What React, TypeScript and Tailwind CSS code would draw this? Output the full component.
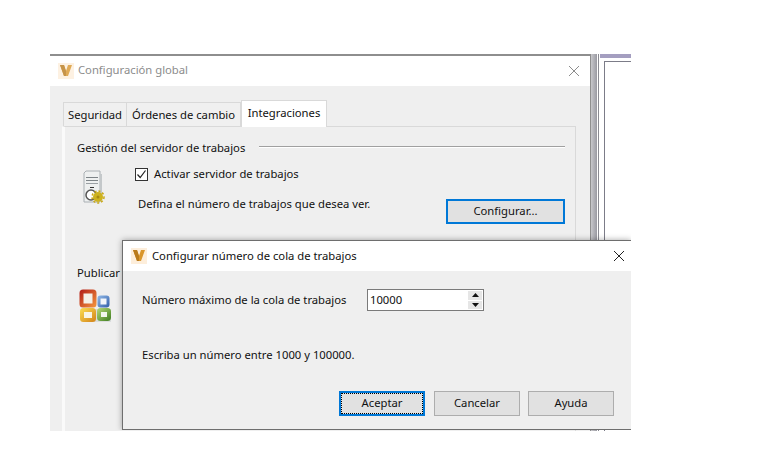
function VaultLogo({ faded }: { faded?: boolean }) {
  return (
    <svg width="16" height="16" viewBox="0 0 16 16" className={faded ? "opacity-80" : ""}>
      <rect width="16" height="16" fill="#fdeedb" />
      <polygon points="2,2 6,2 8,8 10,2 14,2 10,13 6,13" fill="#d9962c" />
      <polygon points="6,2 8,8 8,13 6,13 2,2" fill="#b87a1c" />
    </svg>
  );
}

function ServerIcon() {
  return (
    <svg width="22" height="34" viewBox="0 0 22 34">
      <path d="M1 3 L3 1 H17 V32 H1 Z" fill="#eef0f0" stroke="#aab0b4" />
      <rect x="17" y="4" width="2" height="28" fill="#c4c8ca" />
      <rect x="3" y="7" width="12" height="1" fill="#7d8488" />
      <rect x="3" y="10" width="12" height="1" fill="#7d8488" />
      <rect x="3" y="13" width="12" height="1" fill="#9aa0a4" />
      <rect x="7" y="17" width="4" height="1" fill="#333" />
      <circle cx="8" cy="25" r="5" fill="#fff" stroke="#555" strokeWidth="1.5" />
      <circle cx="15" cy="27" r="5" fill="#cdb21e" />
      <circle cx="15" cy="27" r="6" fill="none" stroke="#c9a814" strokeWidth="1.5" strokeDasharray="2 2" />
      <circle cx="15" cy="27" r="1.5" fill="#a88a10" />
    </svg>
  );
}

function OfficeIcon() {
  return (
    <svg width="33" height="34" viewBox="0 0 33 34">
      <defs>
        <linearGradient id="officeRed" x1="0" y1="0" x2="1" y2="1">
          <stop offset="0" stopColor="#b8281c" />
          <stop offset="1" stopColor="#ee8a3a" />
        </linearGradient>
        <linearGradient id="officeBlue" x1="0" y1="0" x2="1" y2="1">
          <stop offset="0" stopColor="#86aee0" />
          <stop offset="1" stopColor="#3d69b0" />
        </linearGradient>
        <linearGradient id="officeYellow" x1="0" y1="0" x2="1" y2="1">
          <stop offset="0" stopColor="#f6d24a" />
          <stop offset="1" stopColor="#d88e20" />
        </linearGradient>
        <linearGradient id="officeGreen" x1="0" y1="0" x2="1" y2="1">
          <stop offset="0" stopColor="#a6cc6a" />
          <stop offset="1" stopColor="#4f8a2c" />
        </linearGradient>
      </defs>
      <rect x="3" y="20" width="29" height="13" fill="#b8bcc0" opacity="0.35" />
      <rect x="2.5" y="2.5" width="13" height="14" rx="1.5" fill="#f4f0e8" stroke="url(#officeRed)" strokeWidth="4" />
      <rect x="20" y="8" width="9" height="9" rx="1.5" fill="#f2f5fa" stroke="url(#officeBlue)" strokeWidth="3" />
      <rect x="3" y="21" width="12" height="10" rx="1.5" fill="#f8f4e4" stroke="url(#officeYellow)" strokeWidth="4" />
      <rect x="20" y="21" width="10" height="9" rx="1.5" fill="#f2f6ec" stroke="url(#officeGreen)" strokeWidth="4" />
    </svg>
  );
}

function CloseIcon({ color }: { color: string }) {
  return (
    <svg width="12" height="12" viewBox="0 0 12 12">
      <path d="M1 1 L11 11 M11 1 L1 11" stroke={color} strokeWidth="1" fill="none" />
    </svg>
  );
}

function DlgButton({ label, focused }: { label: string; focused?: boolean }) {
  return (
    <div
      className={
        focused
          ? "w-[86px] h-[25px] border-2 border-[#0078d7] bg-[#e1e1e1] flex items-center justify-center"
          : "w-[86px] h-[25px] border border-[#adadad] bg-[#e1e1e1] flex items-center justify-center"
      }
    >
      {focused ? (
        <div className="w-full h-full border border-dotted border-black flex items-center justify-center">{label}</div>
      ) : (
        label
      )}
    </div>
  );
}

export default function App() {
  return (
    <div className="relative w-[758px] h-[454px] bg-white overflow-hidden text-[11.25px] text-[#111] font-['Noto_Sans',sans-serif]">
      {/* back window */}
      <div className="absolute left-[50px] top-[54px] w-[541px] h-[377px] border-t-2 border-r border-[#8e8e8e] bg-[#efefef] flex flex-col">
        <div className="h-[30px] bg-white flex items-center pl-[8px] pr-[10px] shrink-0">
          <VaultLogo faded />
          <span className="ml-[4px] pb-[2px] text-[#8c8c8c] flex-1">Configuración global</span>
          <CloseIcon color="#8c8c8c" />
        </div>
        <div className="flex pl-[13px] pt-[15px] relative">
          <div className="h-[24px] w-[64px] mt-[1px] pt-[1px] bg-[#f0f0f0] border border-b-0 border-[#d9d9d9] flex items-center justify-center">Seguridad</div>
          <div className="h-[24px] w-[114px] mt-[1px] pt-[1px] bg-[#f0f0f0] border-t border-r border-[#d9d9d9] flex items-center justify-center">Órdenes de cambio</div>
          <div className="h-[27px] w-[86px] -mt-[1px] -mb-[1px] bg-white border border-b-0 border-[#d9d9d9] z-10 flex items-center justify-center pb-[2px]">Integraciones</div>
        </div>
        <div className="ml-[12px] w-[514px] flex-1 border border-b-0 border-[#d9d9d9] bg-[#efefef] pl-[12px] border-l-[3px] border-l-[#fafafa] pt-[12px]">
          <div className="flex items-center h-[18px]">
            <span className="whitespace-nowrap">Gestión del servidor de trabajos</span>
            <div className="ml-[14px] flex-1 mr-[10px] mb-[3px] h-[2px] border-t border-[#a0a0a0] bg-white"></div>
          </div>
          <div className="flex mt-[8px]">
            <div className="ml-[6px] mt-[5px] w-[52px]">
              <ServerIcon />
            </div>
            <div className="flex-1">
              <div className="flex items-center h-[18px]">
                <div className="w-[13px] h-[13px] border border-[#333] bg-white flex items-center justify-center">
                  <svg width="11" height="11" viewBox="0 0 11 11">
                    <path d="M1.5 5.5 L4.2 8.5 L9.5 1.5" stroke="#222" strokeWidth="1.2" fill="none" />
                  </svg>
                </div>
                <span className="ml-[6px]">Activar servidor de trabajos</span>
              </div>
              <div className="flex items-start mt-[11px] pl-[3px]">
                <span className="w-[308px] mt-[2px]">Defina el número de trabajos que desea ver.</span>
                <div className="w-[119px] h-[25px] mt-[5px] border-2 border-[#0078d7] bg-[#e1e1e1] flex items-center justify-center">Configurar...</div>
              </div>
            </div>
          </div>
          <div className="mt-[41px]">Publicar</div>
          <div className="mt-[7px] ml-[2px]">
            <OfficeIcon />
          </div>
        </div>
      </div>

      {/* window behind, on the right */}
      <div className="absolute left-[591px] top-[54px] w-[40px] h-[377px] flex">
        <div className="w-[6px] h-full bg-gradient-to-r from-[#c8c8cc] to-[#9a9aa2]"></div>
        <div className="w-[1px] h-full bg-[#8a8a92] ml-[1px]"></div>
        <div className="flex-1 flex flex-col ml-[1px]">
          <div className="h-[4px] bg-[#a49ec0]"></div>
          <div className="flex-1 ml-[4px] mt-[3px] border-t border-l border-[#7c7c88] bg-white"></div>
        </div>
      </div>

      {/* dialog */}
      <div className="absolute left-[122px] top-[240px] w-[509px] h-[190px] border-y border-l border-[#6e6e6e] bg-[#efefef] shadow-[0_0_6px_rgba(0,0,0,0.35)] [clip-path:inset(-8px_0_0_-8px)] flex flex-col">
        <div className="h-[30px] bg-white flex items-center pl-[8px] pr-[6px] shrink-0">
          <VaultLogo />
          <span className="ml-[5px] flex-1">Configurar número de cola de trabajos</span>
          <CloseIcon color="#222" />
        </div>
        <div className="flex items-center mt-[18px] ml-[19px] h-[22px]">
          <span className="w-[225px]">Número máximo de la cola de trabajos</span>
          <div className="w-[117px] h-[22px] border border-[#7a7a7a] bg-white flex items-center justify-between">
            <span className="pl-[2px]">10000</span>
            <div className="w-[16px] h-full flex flex-col gap-[1px] p-[1px] bg-white">
              <div className="flex-1 bg-[#e6e6e6] flex items-center justify-center">
                <svg width="7" height="4" viewBox="0 0 7 4">
                  <polygon points="3.5,0 7,4 0,4" fill="#111" />
                </svg>
              </div>
              <div className="flex-1 bg-[#e6e6e6] flex items-center justify-center">
                <svg width="7" height="4" viewBox="0 0 7 4">
                  <polygon points="0,0 7,0 3.5,4" fill="#111" />
                </svg>
              </div>
            </div>
          </div>
        </div>
        <div className="ml-[19px] mt-[36px]">Escriba un número entre 1000 y 100000.</div>
        <div className="flex mt-[27px] ml-[216px]">
          <DlgButton label="Aceptar" focused />
          <div className="ml-[9px]">
            <DlgButton label="Cancelar" />
          </div>
          <div className="ml-[8px]">
            <DlgButton label="Ayuda" />
          </div>
        </div>
      </div>
    </div>
  );
}
